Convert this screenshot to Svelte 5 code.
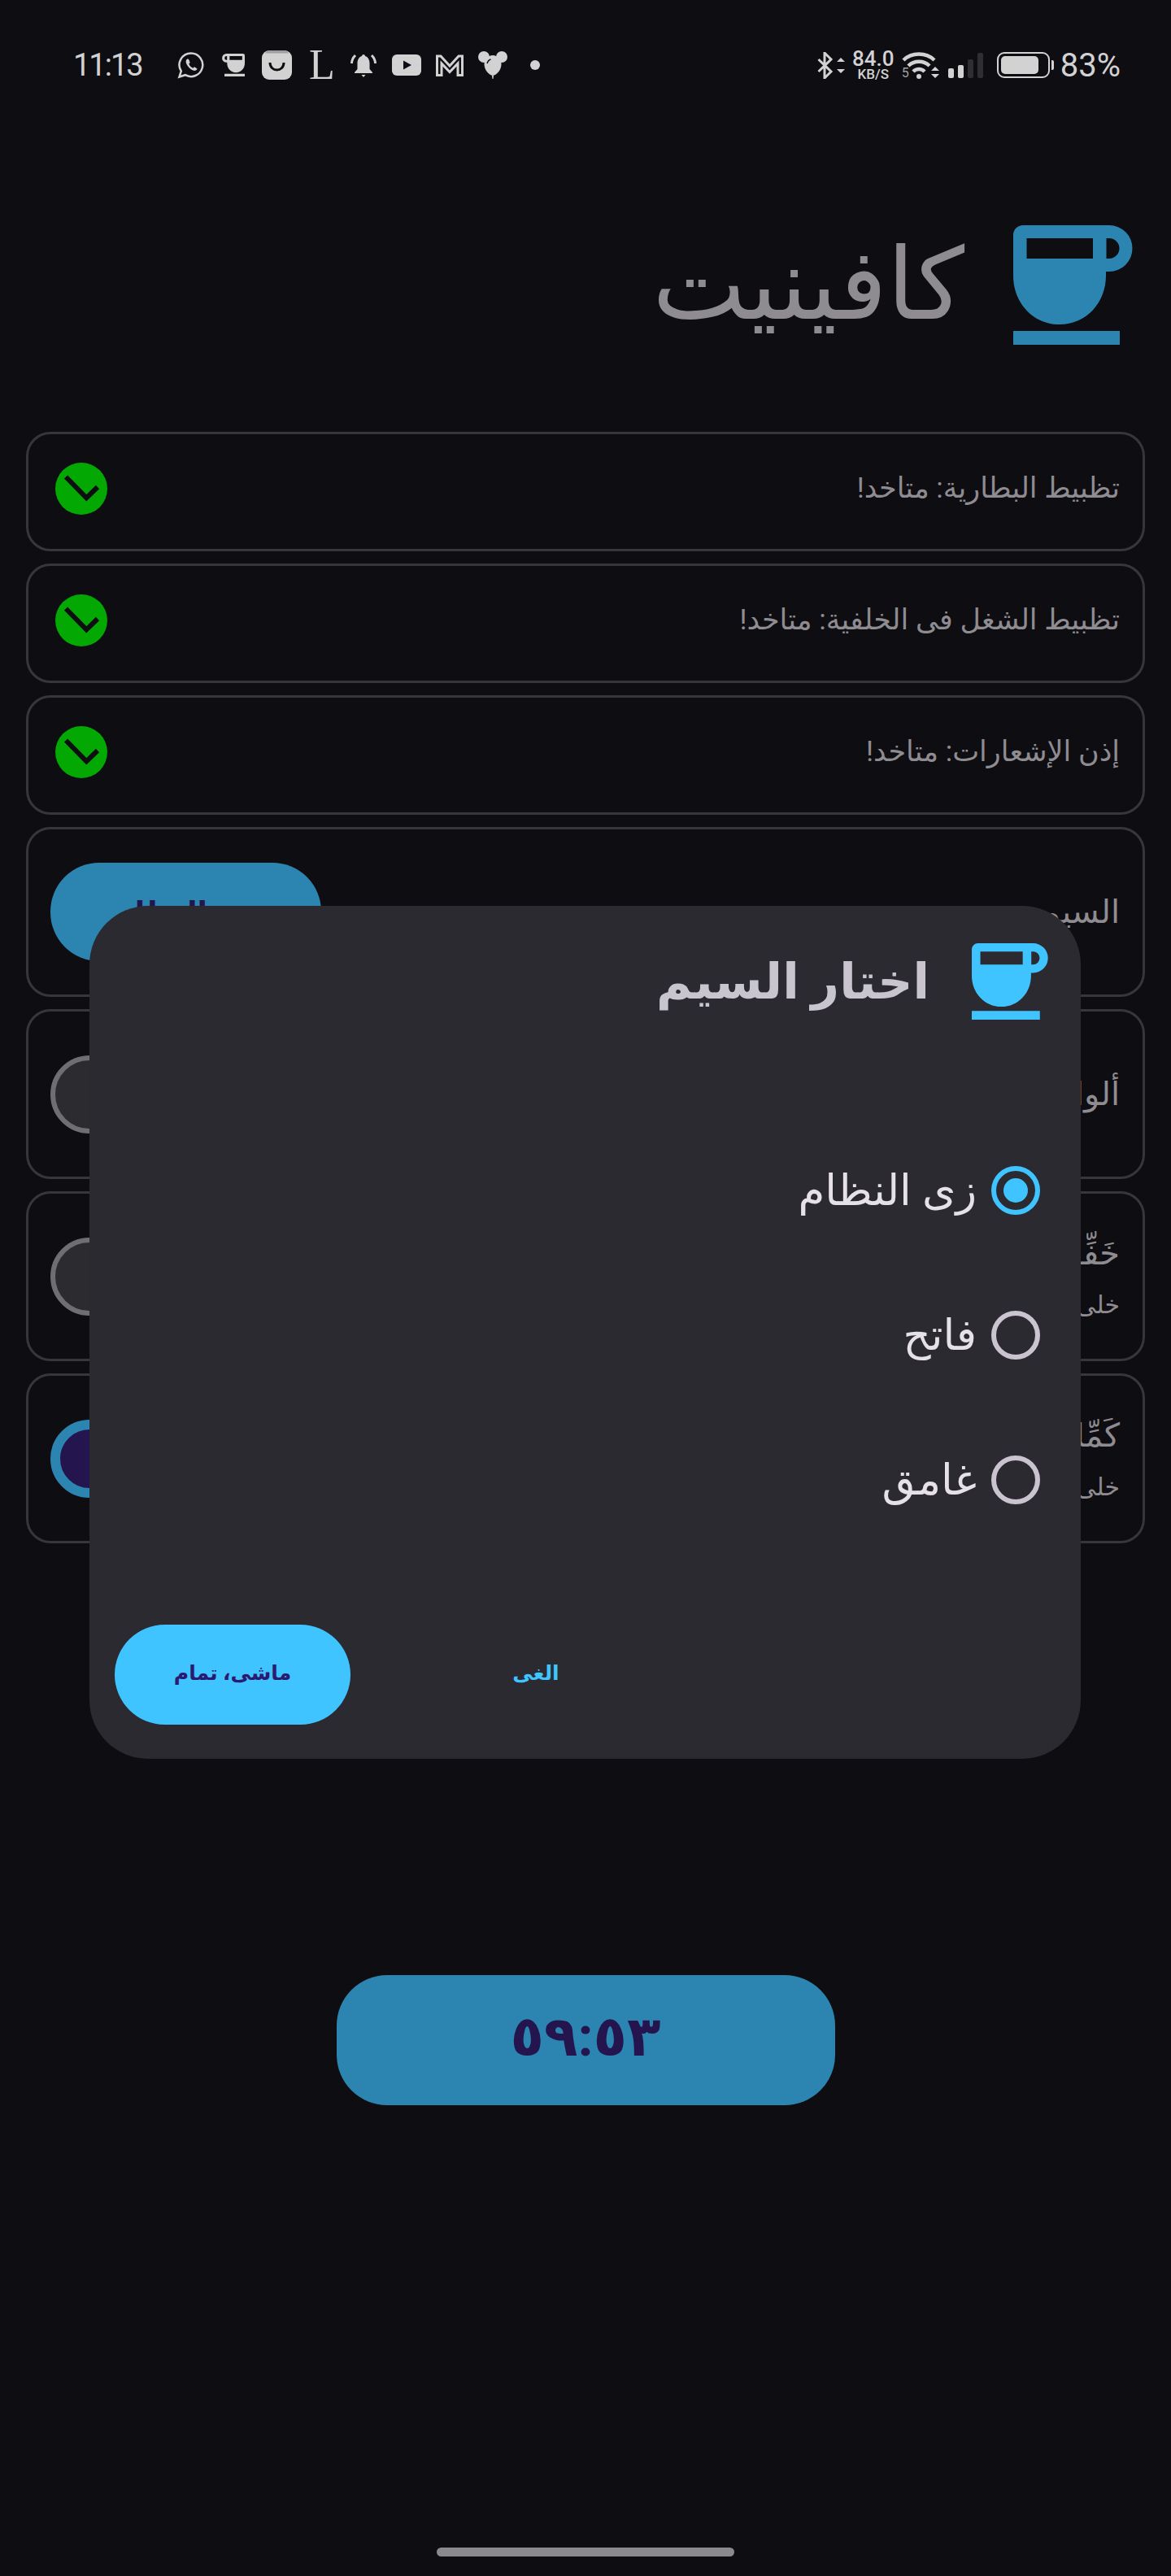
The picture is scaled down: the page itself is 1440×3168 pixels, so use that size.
<script lang="ts">
	const permissions = ['تظبيط البطارية: متاخد!', 'تظبيط الشغل فى الخلفية: متاخد!', 'إذن الإشعارات: متاخد!'];
	const themes = [
		{ label: 'زى النظام', selected: true },
		{ label: 'فاتح', selected: false },
		{ label: 'غامق', selected: false }
	];
	const toggles = [
		{ title: 'ألوان ديناميكية', on: false },
		{ title: 'خَفِّف الإشعارات', sub: 'خلى الصوت', on: false },
		{ title: 'كَمِّل على طول', sub: 'خلى الشاشة', on: true }
	];
</script>

{#snippet cup(cls: string)}
	<svg class={cls} viewBox="0 0 147 147" aria-hidden="true">
		<path
			fill-rule="evenodd"
			d="M12 0H118A28.5 28.5 0 0 1 118 57H114V62C114 95 90 122 57 122C24 122 0 95 0 62V12A12 12 0 0 1 12 0ZM16.5 16V41H98V16ZM114.500 16V41H118A12.500 12.500 0 0 0 118 16ZM0 130H131V147H0Z"
		/>
	</svg>
{/snippet}

<div class="page">
	<div class="status-bar">
		<div class="status-left">
			<span class="time">11:13</span>
			<div class="notif-icons">
				<svg class="ic-wa" viewBox="0 0 34 34">
					<path class="line" d="M17 2.500A14.300 14.300 0 1 1 9.800 29.200L2.500 31.500L4.800 24.500A14.300 14.300 0 0 1 17 2.500Z" />
					<path class="solid" d="M12.300 9.500C10.500 10.500 10 13 11.500 16C13 19 16 22.500 20 23.800C22 24.400 24 23.300 24.500 21.500L21 19.300L19.300 20.800C17 19.800 15.200 17.800 14.300 15.500L15.700 14L14 9.800Z" />
				</svg>
				{@render cup('ic-coffee')}
				<svg class="ic-shop" viewBox="0 0 37 36">
					<rect class="solid" width="37" height="36" rx="9" />
					<path class="band" d="M4 3.500C5.500 1.200 7 0 9 0H28C30 0 31.500 1.200 33 3.500Z" />
					<path class="cut" d="M10 15C10 27 27 27 27 15" />
				</svg>
				<span class="serif-l">L</span>
				<svg class="ic-bell" viewBox="0 0 32 32">
					<path class="solid" d="M16 3C17.300 3 18 4 18 5C22 6 23.500 10 23.500 14V21L27 25V26H5V25L8.500 21V14C8.500 10 10 6 14 5C14 4 14.700 3 16 3ZM13.500 28H18.500L16 31Z" />
					<path class="line thin" d="M6 4C3 7 1.500 10 1.500 14M26 4C29 7 30.500 10 30.500 14" />
				</svg>
				<svg class="ic-yt" viewBox="0 0 36 26">
					<rect class="solid" width="36" height="26" rx="6" />
					<path class="hole" d="M14 7.500L24 13L14 18.500Z" />
				</svg>
				<svg class="ic-m" viewBox="0 0 34 27">
					<path class="line thin" d="M1.500 2H6L17 14L28 2H32.500V25.500H27V11L17 21.500L7 11V25.500H1.500Z" />
				</svg>
				<svg class="ic-mouse" viewBox="0 0 36 34">
					<circle class="solid" cx="7" cy="7" r="7" />
					<circle class="solid" cx="29" cy="7" r="7" />
					<path class="solid" d="M18 5C24 5 28.500 10 28.500 16C28.500 23 23 29 18 30C13 29 7.500 23 7.500 16C7.500 10 12 5 18 5Z" />
					<path class="solid" d="M17 30H19L18.500 34H17.500Z" />
					<path class="line hairline" d="M11 15C12 12 13.500 10.500 15.500 10" />
				</svg>
				<span class="dot"></span>
			</div>
		</div>
		<div class="status-right">
			<svg class="ic-bt" viewBox="0 0 34 33">
				<path class="line thin" d="M1.500 9L17 24L9 32V1L17 9L1.500 24" />
				<path class="solid" d="M24 12L29 7L34 12ZM24 21H34L29 26Z" />
			</svg>
			<div class="speed">
				<span class="speed-num">84.0</span>
				<span class="speed-unit">KB/S</span>
			</div>
			<div class="wifi">
				<span class="wifi-five">5</span>
				<svg viewBox="0 0 46 34">
					<path class="line wide" d="M2 11C12 1 30 1 40 11" />
					<path class="line wide" d="M8 18C15 11 27 11 34 18" />
					<path class="line wide" d="M14 25C18 21 24 21 28 25" />
					<circle class="solid" cx="21" cy="31" r="3" />
					<path class="solid" d="M36 24L41 19L46 24ZM36 28H46L41 33Z" />
				</svg>
			</div>
			<div class="signal">
				<span class="bar b1"></span>
				<span class="bar b2"></span>
				<span class="bar b3"></span>
				<span class="bar b4"></span>
			</div>
			<div class="battery">
				<div class="battery-body"><div class="battery-fill"></div></div>
				<span class="battery-nub"></span>
			</div>
			<span class="percent">83%</span>
		</div>
	</div>

	<header class="app-header">
		{@render cup('cup-large')}
		<h1 class="app-title">كافينيت</h1>
	</header>

	<div class="cards">
		{#each permissions as text}
			<div class="card short">
				<span class="card-text">{text}</span>
				<svg class="check" viewBox="0 0 64 64">
					<circle cx="32" cy="32" r="32" />
					<path d="M13 17.500L38.300 43.300L52 30" />
				</svg>
			</div>
		{/each}

		<div class="card tall">
			<span class="card-title">السيم</span>
			<button class="theme-btn">زى النظام</button>
		</div>

		{#each toggles as item}
			<div class="card tall">
				<div class="card-copy">
					<span class="card-title">{item.title}</span>
					{#if item.sub}
						<span class="card-sub">{item.sub}</span>
					{/if}
				</div>
				<div class="switch" class:on={item.on}></div>
			</div>
		{/each}
	</div>

	<button class="timer">٥٩:٥٣</button>
	<div class="home-bar"></div>

	<div class="dialog" role="dialog" aria-label="اختار السيم">
		<div class="dialog-head">
			{@render cup('cup-small')}
			<h2 class="dialog-title">اختار السيم</h2>
		</div>
		<div class="options">
			{#each themes as theme}
				<div class="option">
					<span class="radio" class:selected={theme.selected}></span>
					<span class="option-label">{theme.label}</span>
				</div>
			{/each}
		</div>
		<div class="actions">
			<button class="ok">ماشى، تمام</button>
			<button class="cancel">الغى</button>
		</div>
	</div>
</div>

<style>
	:global(body) {
		margin: 0;
		background: #0e0d12;
	}

	.page {
		position: relative;
		width: 1440px;
		height: 3168px;
		overflow: hidden;
		background: #0e0d12;
		font-family: 'Roboto', 'DejaVu Sans', sans-serif;
		color: #8e8c91;
	}

	button {
		border: none;
		font-family: inherit;
		padding: 0;
	}

	/* Status bar */
	.status-bar {
		height: 160px;
		box-sizing: border-box;
		padding: 0 62px 0 90px;
		display: flex;
		justify-content: space-between;
		align-items: center;
		color: #d2d2d2;
		fill: #d2d2d2;
	}

	.status-left,
	.status-right,
	.notif-icons {
		display: flex;
		align-items: center;
	}

	.time {
		font-size: 38px;
		width: 128px;
		letter-spacing: -2px;
	}

	.notif-icons {
		gap: 21px;
	}

	.solid {
		fill: #d2d2d2;
	}

	.line {
		fill: none;
		stroke: #d2d2d2;
		stroke-width: 2.5;
	}

	.line.thin {
		stroke-width: 3;
	}

	.line.wide {
		stroke-width: 4.500;
	}

	.line.hairline {
		stroke: #0e0d12;
		stroke-width: 1.5;
	}

	.hole {
		fill: #0e0d12;
	}

	.band {
		fill: #a0a0a0;
	}

	.cut {
		fill: none;
		stroke: #0e0d12;
		stroke-width: 3;
	}

	.ic-wa {
		width: 34px;
		height: 34px;
	}

	:global(.ic-coffee) {
		width: 28px;
		height: 28px;
		transform: scaleX(-1);
	}

	.ic-shop {
		width: 37px;
		height: 36px;
	}

	.serif-l {
		font-family: 'Liberation Serif', serif;
		font-size: 52px;
		line-height: 36px;
		width: 30px;
	}

	.ic-bell {
		width: 32px;
		height: 32px;
	}

	.ic-yt {
		width: 36px;
		height: 26px;
		margin-left: -2px;
	}

	.ic-m {
		width: 34px;
		height: 27px;
		margin-left: -3px;
	}

	.ic-mouse {
		width: 36px;
		height: 34px;
		margin-left: -3px;
	}

	.dot {
		width: 12px;
		height: 12px;
		margin-left: 7px;
		border-radius: 50%;
		background: #d2d2d2;
	}

	.ic-bt {
		width: 34px;
		height: 33px;
	}

	.speed {
		display: flex;
		flex-direction: column;
		align-items: center;
		margin-left: 7px;
		width: 56px;
	}

	.speed-num {
		font-size: 26px;
		line-height: 23px;
		font-weight: 500;
	}

	.speed-unit {
		font-size: 17px;
		line-height: 15px;
		font-weight: 500;
	}

	.wifi {
		position: relative;
		margin-left: 7px;
		width: 47px;
		height: 34px;
		display: flex;
	}

	.wifi svg {
		width: 46px;
		height: 34px;
	}

	.wifi-five {
		position: absolute;
		left: 0;
		bottom: -1px;
		font-size: 16px;
		line-height: 16px;
		color: #a0a0a0;
	}

	.signal {
		display: flex;
		align-items: flex-end;
		gap: 5px;
		margin-left: 10px;
		height: 32px;
	}

	.bar {
		width: 7px;
		border-radius: 2px;
		background: #d2d2d2;
	}

	.b1 {
		height: 12px;
	}

	.b2 {
		height: 16px;
	}

	.b3 {
		height: 23px;
		background: #2f2e33;
	}

	.b4 {
		height: 31px;
		background: #2f2e33;
	}

	.battery {
		display: flex;
		align-items: center;
		margin-left: 17px;
	}

	.battery-body {
		box-sizing: border-box;
		width: 65px;
		height: 32px;
		padding: 3px;
		border: 2px solid #d2d2d2;
		border-radius: 9px;
	}

	.battery-fill {
		width: 46px;
		height: 100%;
		border-radius: 5px;
		background: #d2d2d2;
	}

	.battery-nub {
		width: 3px;
		height: 12px;
		margin-left: 2px;
		border-radius: 0 2px 2px 0;
		background: #d2d2d2;
	}

	.percent {
		font-size: 40px;
		margin-left: 8px;
	}

	/* Header */
	.app-header {
		direction: rtl;
		display: flex;
		align-items: center;
		gap: 60px;
		padding: 117px 47px 107px 0;
	}

	:global(.cup-large) {
		width: 147px;
		height: 147px;
		fill: #2c85b0;
	}

	.app-title {
		margin: 0;
		font-size: 122px;
		line-height: 147px;
		font-weight: 400;
		color: #8e8c91;
	}

	/* Cards */
	.cards {
		display: flex;
		flex-direction: column;
		gap: 15px;
		padding: 0 32px;
	}

	.card {
		direction: rtl;
		box-sizing: border-box;
		display: flex;
		align-items: center;
		justify-content: space-between;
		padding: 0 28px 0 27px;
		border: 3px solid #37363b;
		border-radius: 30px;
	}

	.card.short {
		height: 147px;
		padding-bottom: 8px;
	}

	.card.tall {
		height: 209px;
	}

	.card-text {
		font-size: 35px;
		color: #8e8c91;
	}

	.card-copy {
		display: flex;
		flex-direction: column;
		gap: 22px;
	}

	.card-title {
		font-size: 40px;
		color: #8e8c91;
	}

	.card-sub {
		font-size: 30px;
		color: #8e8c91;
	}

	.check {
		width: 64px;
		height: 64px;
		flex-shrink: 0;
		margin-left: 6px;
	}

	.check circle {
		fill: #03a803;
	}

	.check path {
		fill: none;
		stroke: #0e0d12;
		stroke-width: 6;
	}

	.theme-btn {
		width: 333px;
		height: 121px;
		border-radius: 60px;
		background: #2c85b0;
		color: #25154f;
		font-size: 36px;
		font-weight: 700;
	}

	.switch {
		box-sizing: border-box;
		width: 160px;
		height: 96px;
		border: 6px solid #6f6e73;
		border-radius: 48px;
		background: #2c2b30;
	}

	.switch.on {
		border: 12px solid #2c85b0;
		background: #25154f;
	}

	/* Timer */
	.timer {
		display: block;
		width: 613px;
		height: 160px;
		margin: 531px auto 0;
		padding-bottom: 8px;
		border-radius: 62px;
		background: #2c85b0;
		color: #25154f;
		font-size: 68px;
		font-weight: 700;
	}

	.home-bar {
		width: 366px;
		height: 11px;
		margin: 544px auto 0;
		border-radius: 6px;
		background: #8a898e;
	}

	/* Dialog */
	.dialog {
		position: absolute;
		top: 1114px;
		left: 110px;
		width: 1219px;
		height: 1049px;
		box-sizing: border-box;
		padding: 46px 40px 42px 31px;
		display: flex;
		flex-direction: column;
		border-radius: 72px;
		background: #2b2a30;
	}

	.dialog-head {
		direction: rtl;
		display: flex;
		align-items: center;
		gap: 52px;
	}

	:global(.cup-small) {
		width: 94px;
		height: 94px;
		fill: #40c4ff;
	}

	.dialog-title {
		margin: 0;
		font-size: 60px;
		font-weight: 700;
		color: #c9c5cf;
	}

	.options {
		direction: rtl;
		margin: 121px 10px 0 0;
		display: flex;
		flex-direction: column;
		flex: 1;
	}

	.option {
		height: 178px;
		display: flex;
		align-items: center;
		gap: 18px;
	}

	.radio {
		box-sizing: border-box;
		width: 60px;
		height: 60px;
		display: flex;
		align-items: center;
		justify-content: center;
		border: 6px solid #cac4d0;
		border-radius: 50%;
	}

	.radio.selected {
		border-color: #40c4ff;
	}

	.radio.selected::after {
		content: '';
		width: 30px;
		height: 30px;
		border-radius: 50%;
		background: #40c4ff;
	}

	.option-label {
		font-size: 53px;
		color: #e6e1e8;
	}

	.actions {
		display: flex;
		align-items: center;
		gap: 90px;
	}

	.ok {
		width: 290px;
		height: 123px;
		padding-bottom: 4px;
		border-radius: 62px;
		background: #40c4ff;
		color: #2a1a70;
		font-size: 25px;
		font-weight: 700;
	}

	.cancel {
		width: 276px;
		height: 123px;
		padding-bottom: 4px;
		background: none;
		color: #40c4ff;
		font-size: 25px;
		font-weight: 700;
	}
</style>
